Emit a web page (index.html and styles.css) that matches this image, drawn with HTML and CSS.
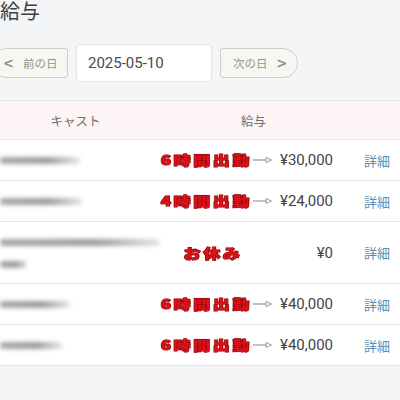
FILE: index.html
```html
<!DOCTYPE html>
<html lang="ja">
<head>
<meta charset="utf-8">
<link rel="stylesheet" href="styles.css">
</head>
<body>
<div class="page">
  <h1 class="title">給与</h1>
  <div class="nav">
    <button class="btn btn-prev"><span class="chev">&lt;</span><span>前の日</span></button>
    <div class="date">2025-05-10</div>
    <button class="btn btn-next"><span>次の日</span><span class="chev">&gt;</span></button>
  </div>
  <div class="table">
    <div class="row head">
      <div class="c-name">キャスト</div>
      <div class="c-pay">給与</div>
    </div>
    <div class="row">
      <div class="c-name"><div class="blur" style="width:80px"></div></div>
      <div class="c-note"><span class="red">6時間出勤</span><svg class="arrow" width="20" height="8" viewBox="0 0 20 8"><path d="M0 4H13" stroke="#9a9a9a" stroke-width="1.2" fill="none"/><path d="M13 1.5L18.5 4L13 6.5Z" stroke="#9a9a9a" stroke-width="1" fill="#fff"/></svg></div>
      <div class="c-amt">¥30,000</div>
      <div class="c-det">詳細</div>
    </div>
    <div class="row">
      <div class="c-name"><div class="blur" style="width:82px"></div></div>
      <div class="c-note"><span class="red">4時間出勤</span><svg class="arrow" width="20" height="8" viewBox="0 0 20 8"><path d="M0 4H13" stroke="#9a9a9a" stroke-width="1.2" fill="none"/><path d="M13 1.5L18.5 4L13 6.5Z" stroke="#9a9a9a" stroke-width="1" fill="#fff"/></svg></div>
      <div class="c-amt">¥24,000</div>
      <div class="c-det">詳細</div>
    </div>
    <div class="row tall">
      <div class="c-name two"><div class="blur" style="width:160px"></div><div class="blur" style="width:27px"></div></div>
      <div class="c-note center"><span class="red">お休み</span></div>
      <div class="c-amt">¥0</div>
      <div class="c-det">詳細</div>
    </div>
    <div class="row">
      <div class="c-name"><div class="blur" style="width:70px"></div></div>
      <div class="c-note"><span class="red">6時間出勤</span><svg class="arrow" width="20" height="8" viewBox="0 0 20 8"><path d="M0 4H13" stroke="#9a9a9a" stroke-width="1.2" fill="none"/><path d="M13 1.5L18.5 4L13 6.5Z" stroke="#9a9a9a" stroke-width="1" fill="#fff"/></svg></div>
      <div class="c-amt">¥40,000</div>
      <div class="c-det">詳細</div>
    </div>
    <div class="row">
      <div class="c-name"><div class="blur" style="width:62px"></div></div>
      <div class="c-note"><span class="red">6時間出勤</span><svg class="arrow" width="20" height="8" viewBox="0 0 20 8"><path d="M0 4H13" stroke="#9a9a9a" stroke-width="1.2" fill="none"/><path d="M13 1.5L18.5 4L13 6.5Z" stroke="#9a9a9a" stroke-width="1" fill="#fff"/></svg></div>
      <div class="c-amt">¥40,000</div>
      <div class="c-det">詳細</div>
    </div>
  </div>
</div>
</body>
</html>
```
FILE: styles.css
```css
* { box-sizing: border-box; }
html, body { margin: 0; padding: 0; }
body {
  background: #f4f5f7;
  font-family: Roboto, "Liberation Sans", "Noto Sans CJK JP", sans-serif;
  color: #444;
  width: 400px;
  height: 400px;
  overflow: hidden;
}
.page { display: flex; flex-direction: column; }
.title {
  margin: 0;
  font-family: "Noto Sans CJK JP", sans-serif;
  font-weight: 400;
  font-size: 20px;
  line-height: 22px;
  height: 22px;
  color: #3f3f3f;
}
.nav {
  display: flex;
  align-items: center;
  gap: 8px;
  margin-top: 22px;
  height: 38px;
}
.btn {
  display: flex;
  align-items: center;
  height: 30px;
  background: #f6f7f3;
  border: 1px solid #cdd1c5;
  color: #8e9a87;
  font-family: "Noto Sans CJK JP", sans-serif;
  font-size: 11.5px;
  padding: 0;
  margin: 0;
}
.btn .chev {
  font-family: "DejaVu Sans", sans-serif;
  font-size: 13px;
  color: #8c8c8c;
  font-weight: 700;
  transform: scaleY(1.1);
}
.btn-prev {
  margin-left: -8px;
  width: 76px;
  padding-left: 10px;
  gap: 9px;
  border-radius: 14px 3px 3px 14px;
}
.btn-next {
  width: 78px;
  padding-left: 12px;
  gap: 9px;
  border-radius: 3px 15px 15px 3px;
}
.date {
  width: 136px;
  height: 38px;
  background: #fff;
  border: 1px solid #e3e4e6;
  border-radius: 4px;
  display: flex;
  align-items: center;
  padding-left: 11px;
  font-size: 15px;
  color: #4a4a4a;
}
.table {
  margin-top: 18px;
  border-top: 1px solid #e8e8e8;
  background: #fff;
}
.row {
  display: grid;
  grid-template-columns: 155px 118px 67px 1fr;
  align-items: center;
  height: 41px;
  border-bottom: 1px solid #e6e6e6;
  background: #fff;
}
.row.tall { height: 62px; }
.row.head {
  height: 39px;
  background: #fdf5f5;
  font-family: "Noto Sans CJK JP", sans-serif;
  font-size: 12.5px;
  color: #6e6e6e;
}
.head .c-name { text-align: center; padding-right: 4px; }
.head .c-pay { grid-column: 2 / 4; text-align: center; padding-left: 12px; }
.c-name { display: flex; flex-direction: column; gap: 15px; }
.c-name.two { padding-top: 2px; }
.blur {
  height: 7px;
  background: linear-gradient(90deg, #a8a8a8 0%, #9c9c9c 60%, rgba(170,170,170,0.3) 100%);
  filter: blur(2.2px);
  border-radius: 3px;
}
.c-note {
  display: flex;
  align-items: center;
  justify-content: flex-end;
  gap: 1px;
}
.c-note.center { justify-content: center; padding-right: 2px; }
.red {
  font-family: "Noto Sans CJK JP", sans-serif;
  font-weight: 900;
  font-size: 17px;
  letter-spacing: 2.6px;
  color: #d8131b;
  -webkit-text-stroke: 1.5px #8a0a10;
  paint-order: stroke fill;
  text-shadow: 0 0 1px #a00, 0 0 2px rgba(180,0,0,0.4);
  display: inline-block;
  transform: scaleY(0.76);
  line-height: 18px;
}
.arrow { display: block; flex: none; }
.c-amt {
  text-align: right;
  padding-right: 7px;
  font-size: 15px;
  color: #444;
}
.c-det {
  padding-left: 24px;
  font-family: "Noto Sans CJK JP", sans-serif;
  font-size: 13px;
  color: #5e8db2;
}
```
